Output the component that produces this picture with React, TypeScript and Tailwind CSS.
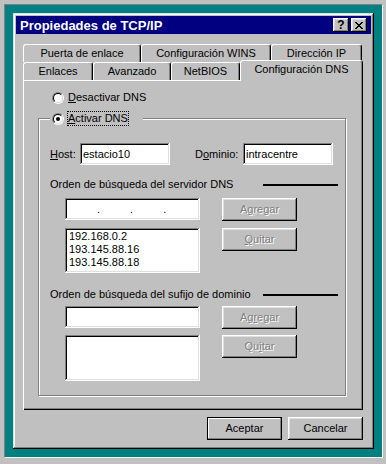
const raised =
  "shadow-[inset_-1px_-1px_#000,inset_1px_1px_#fff,inset_-2px_-2px_#808080,inset_2px_2px_#dfdfdf]";
const sunken =
  "shadow-[inset_-1px_-1px_#fff,inset_1px_1px_#808080,inset_-2px_-2px_#dfdfdf,inset_2px_2px_#000]";

const backTabs = [
  { label: "Puerta de enlace", w: "w-[118px]" },
  { label: "Configuración WINS", w: "w-[130px]" },
  { label: "Dirección IP", w: "w-[91px]" },
];

const frontTabs = [
  { label: "Enlaces", w: "w-[70px]" },
  { label: "Avanzado", w: "w-[78px]" },
  { label: "NetBIOS", w: "w-[69px]" },
];

const servers = ["192.168.0.2", "193.145.88.16", "193.145.88.18"];

function Radio({ checked }: { checked?: boolean }) {
  return (
    <span className="flex h-[12px] w-[12px] shrink-0 rounded-full border border-b-white border-l-[#808080] border-r-white border-t-[#808080]">
      <span className="flex h-[10px] w-[10px] items-center justify-center rounded-full border border-b-[#dfdfdf] border-l-black border-r-[#dfdfdf] border-t-black bg-white">
        {checked && <span className="h-[4px] w-[4px] rounded-full bg-black" />}
      </span>
    </span>
  );
}

function Btn({ children, disabled }: { children: React.ReactNode; disabled?: boolean }) {
  return (
    <div
      className={`flex h-[23px] w-[75px] shrink-0 items-center justify-center bg-[#c0c0c0] ${raised} ${
        disabled ? "text-[#808080] [text-shadow:1px_1px_0_#fff]" : ""
      }`}
    >
      {children}
    </div>
  );
}

function CloseGlyph() {
  return (
    <svg width="8" height="7" viewBox="0 0 8 7" shapeRendering="crispEdges">
      <path
        fill="#000"
        d="M0 0h2v1H0zM6 0h2v1H6zM1 1h2v1H1zM5 1h2v1H5zM2 2h4v1H2zM3 3h2v1H3zM2 4h4v1H2zM1 5h2v1H1zM5 5h2v1H5zM0 6h2v1H0zM6 6h2v1H6z"
      />
    </svg>
  );
}

function OrderHeading({ children }: { children: React.ReactNode }) {
  return (
    <div className="flex h-[13px] items-center justify-between">
      <span>{children}</span>
      <span className="h-[2px] w-[75px] bg-black" />
    </div>
  );
}

export default function App() {
  return (
    <div className="flex h-[464px] w-[386px] flex-col bg-[#c0c0c0] pb-[6px] pl-[4px] pr-[3px] pt-[4px] font-['Liberation_Sans',Arial,sans-serif] text-[11px] leading-[13px] text-black">
      <div className="flex-1 border border-b-white border-l-[#808080] border-r-white border-t-[#808080] bg-[#008080] p-[8px]">
        <div className="flex h-[436px] w-[361px] flex-col bg-[#c0c0c0] p-[3px] shadow-[inset_-1px_-1px_#000,inset_1px_1px_#dfdfdf,inset_-2px_-2px_#808080,inset_2px_2px_#fff]">
          {/* title bar */}
          <div className="flex h-[18px] items-center justify-between bg-[#000080] pl-[4px] pr-[4px]">
            <span className="text-[13px] font-bold text-white">Propiedades de TCP/IP</span>
            <div className="flex gap-[2px]">
              <div className={`flex h-[14px] w-[16px] items-center justify-center bg-[#c0c0c0] text-[12px] font-bold ${raised}`}>
                ?
              </div>
              <div className={`flex h-[14px] w-[16px] items-center justify-center bg-[#c0c0c0] ${raised}`}>
                <CloseGlyph />
              </div>
            </div>
          </div>

          {/* tabs + page */}
          <div className="ml-[7px] mt-[10px] w-[340px]">
            <div className="flex h-[18px]">
              {backTabs.map((t) => (
                <div
                  key={t.label}
                  className={`flex h-[18px] items-center justify-center rounded-t-[3px] border-l border-r border-t border-l-white border-r-black border-t-white bg-[#c0c0c0] shadow-[inset_-1px_0_#808080] ${t.w}`}
                >
                  {t.label}
                </div>
              ))}
            </div>
            <div className="-mt-[2px] flex h-[20px] items-end">
              {frontTabs.map((t) => (
                <div
                  key={t.label}
                  className={`flex h-[18px] items-center justify-center rounded-t-[3px] border-l border-r border-t border-l-white border-r-black border-t-white bg-[#c0c0c0] shadow-[inset_-1px_0_#808080] ${t.w}`}
                >
                  {t.label}
                </div>
              ))}
              <div className="relative z-10 -mb-[1px] flex h-[21px] w-[123px] items-center justify-center rounded-t-[3px] border-l border-r border-t border-l-white border-r-black border-t-white bg-[#c0c0c0] pb-[3px] shadow-[inset_-1px_0_#808080]">
                Configuración DNS
              </div>
            </div>

            <div className="h-[330px] w-[340px] bg-[#c0c0c0] pl-[15px] pt-[11px] shadow-[inset_1px_1px_#fff,inset_-1px_-1px_#000,inset_-2px_-2px_#808080]">
              <div className="ml-[14px] flex h-[13px] items-center gap-[4px]">
                <Radio />
                <span>
                  <span className="underline">D</span>esactivar DNS
                </span>
              </div>

              <fieldset className="mt-[7px] w-[308px] border border-[#808080] pb-[14px] pl-[11px] pr-[7px] shadow-[inset_1px_1px_#fff,1px_1px_0_#fff]">
                <legend className="flex w-[93px] items-center gap-[3px] bg-[#c0c0c0] pl-[2px]">
                  <Radio checked />
                  <span className="border border-dotted border-black">
                    <span className="underline">A</span>ctivar DNS
                  </span>
                </legend>

                <div className="mt-[17px] flex h-[22px] items-center">
                  <span className="w-[30px]">
                    <span className="underline">H</span>ost:
                  </span>
                  <div className={`flex h-[22px] w-[90px] items-center bg-white pl-[3px] ${sunken}`}>estacio10</div>
                  <span className="ml-[25px] w-[48px]">
                    D<span className="underline">o</span>minio:
                  </span>
                  <div className={`flex h-[22px] w-[90px] items-center bg-white pl-[3px] ${sunken}`}>intracentre</div>
                </div>

                <div className="mt-[13px]">
                  <OrderHeading>Orden de búsqueda del servidor DNS</OrderHeading>
                </div>

                <div className="ml-[15px] mt-[7px] flex items-start gap-[22px]">
                  <div className={`flex h-[22px] w-[135px] items-center gap-[30px] bg-white pl-[32px] ${sunken}`}>
                    <span>.</span>
                    <span>.</span>
                    <span>.</span>
                  </div>
                  <Btn disabled>
                    A<span className="underline">g</span>regar
                  </Btn>
                </div>

                <div className="ml-[15px] mt-[7px] flex items-start gap-[22px]">
                  <div className={`h-[45px] w-[135px] bg-white px-[4px] py-[2px] ${sunken}`}>
                    {servers.map((s) => (
                      <div key={s}>{s}</div>
                    ))}
                  </div>
                  <Btn disabled>
                    <span className="underline">Q</span>uitar
                  </Btn>
                </div>

                <div className="mt-[15px]">
                  <OrderHeading>Orden de búsqueda del sufijo de dominio</OrderHeading>
                </div>

                <div className="ml-[15px] mt-[5px] flex items-start gap-[22px]">
                  <div className={`h-[22px] w-[135px] bg-white ${sunken}`} />
                  <Btn disabled>
                    Ag<span className="underline">r</span>egar
                  </Btn>
                </div>

                <div className="ml-[15px] mt-[6px] flex items-start gap-[22px]">
                  <div className={`h-[46px] w-[135px] bg-white ${sunken}`} />
                  <Btn disabled>
                    Qu<span className="underline">i</span>tar
                  </Btn>
                </div>
              </fieldset>
            </div>
          </div>

          {/* dialog buttons */}
          <div className="mt-[7px] flex justify-end gap-[6px] pr-[8px]">
            <div className="flex h-[23px] w-[75px] items-center justify-center border border-black bg-[#c0c0c0] shadow-[inset_-1px_-1px_#808080,inset_1px_1px_#fff]">
              Aceptar
            </div>
            <Btn>Cancelar</Btn>
          </div>
        </div>
      </div>
    </div>
  );
}
